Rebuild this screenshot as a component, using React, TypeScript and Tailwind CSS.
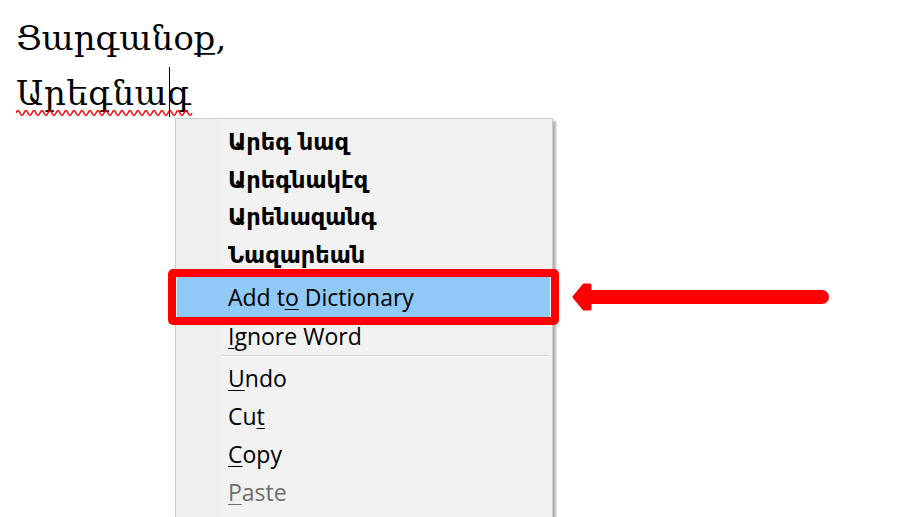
const menuFont = { fontFamily: '"Open Sans", "Noto Sans", "DejaVu Sans", sans-serif' };
const armBold = { fontFamily: '"DejaVu Sans", sans-serif' };

function U({ children }: { children: React.ReactNode }) {
  return <span className="underline underline-offset-[3px] decoration-[1px]">{children}</span>;
}

// spell-check squiggle under the misspelled word
const wave = 'M0 4 q2 -5 4 0' + ' t4 0'.repeat(43);

export default function App() {
  const suggestions = ['Արեգ նազ', 'Արեգնակէզ', 'Արենազանգ', 'Նազարեան'];

  return (
    <div className="relative w-[907px] h-[517px] overflow-hidden bg-white">
      {/* document text */}
      <div
        className="pl-[16px] pt-[11px] text-[34px] leading-[55px] text-black"
        style={{ fontFamily: '"DejaVu Serif", serif' }}
      >
        <div>Ցարգանօք,</div>
        <div>
          <span className="relative tracking-[0.5px]">
            Արեգնա
            <span className="relative inline-block w-0 h-0">
              <span className="absolute left-[2px] -top-[38px] w-px h-[50px] bg-black"></span>
            </span>
            գ
            <svg className="absolute left-0 top-[36px]" width="177" height="9" viewBox="0 0 177 9">
              <path d={wave} fill="none" stroke="#ff0000" strokeWidth="1.5" />
            </svg>
          </span>
        </div>
      </div>

      {/* context menu */}
      <div
        className="absolute left-[175px] top-[118px] w-[378px] h-[420px] border border-[#cccccc] bg-[linear-gradient(to_right,#efefef_46px,#f2f2f2_46px)] shadow-[3px_3px_2px_rgba(0,0,0,0.3)] text-black"
      >
        <div className="pt-[5px]">
          {suggestions.map((s) => (
            <div key={s} className="h-[37.5px] leading-[37.5px] pl-[52px] text-[22.5px] font-bold" style={armBold}>
              {s}
            </div>
          ))}
        </div>
        <div className="mt-[3px] ml-[1px] mr-[2px] h-[40px] leading-[40px] pl-[51px] bg-[#90c8f6] text-[23px]" style={menuFont}>
          Add t<U>o</U> Dictionary
        </div>
        <div className="h-[38px] leading-[38px] pl-[52px] text-[23px]" style={menuFont}>
          <U>I</U>gnore Word
        </div>
        <div className="ml-[46px] mr-[3px] h-px bg-[#d7d7d7] border-b border-white box-content"></div>
        <div className="mt-[2px]" style={menuFont}>
          <div className="h-[38px] leading-[38px] pl-[52px] text-[23px]">
            <U>U</U>ndo
          </div>
          <div className="h-[38px] leading-[38px] pl-[52px] text-[23px]">
            Cu<U>t</U>
          </div>
          <div className="h-[38px] leading-[38px] pl-[52px] text-[23px]">
            <U>C</U>opy
          </div>
          <div className="h-[38px] leading-[38px] pl-[52px] text-[23px] text-[#6d6d6d]">
            <U>P</U>aste
          </div>
        </div>
      </div>

      {/* annotation: red box */}
      <div className="absolute left-[168px] top-[269px] w-[391px] h-[56px] border-[8px] border-[#ff0000] rounded-[5px]"></div>

      {/* annotation: arrow */}
      <svg className="absolute left-[565px] top-[278px]" width="272" height="36" viewBox="0 0 272 36">
        <line x1="25" y1="19" x2="257" y2="19" stroke="#ff0000" strokeWidth="14" strokeLinecap="round" />
        <polygon
          points="9,19 19,7 25,7 25,31 19,31"
          fill="#ff0000"
          stroke="#ff0000"
          strokeWidth="3"
          strokeLinejoin="round"
        />
      </svg>
    </div>
  );
}
